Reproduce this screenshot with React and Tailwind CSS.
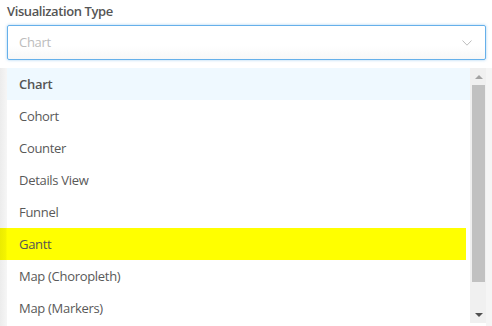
const OPTIONS = [
  'Chart',
  'Cohort',
  'Counter',
  'Details View',
  'Funnel',
  'Gantt',
  'Map (Choropleth)',
  'Map (Markers)',
];

function Chevron() {
  return (
    <svg width="10" height="6" viewBox="0 0 10 6" fill="none" className="text-[#bdbdbd]">
      <path d="M0.5 0.5 L5 5.2 L9.5 0.5" stroke="currentColor" strokeWidth="1" />
    </svg>
  );
}

function Option({ label }) {
  if (label === 'Chart') {
    return (
      <div className="flex h-[32px] items-center bg-[#eff9ff] pl-[12px] pt-[2px] font-semibold text-[#555]">
        {label}
      </div>
    );
  }
  if (label === 'Gantt') {
    return (
      <div className="-ml-[7px] mr-[4px] flex h-[32px] items-center bg-[linear-gradient(to_right,#ebeb00_0px,#f4f400_6px,#ffff00_7px)] pl-[19px] pt-[2px] text-[#555]">
        {label}
      </div>
    );
  }
  return <div className="flex h-[32px] items-center pl-[12px] pt-[2px] text-[#595959]">{label}</div>;
}

export default function App() {
  return (
    <div className="h-[326px] w-[492px] overflow-hidden bg-white text-[13px] tracking-[-0.3px]" style={{ fontFamily: '"Open Sans", "Noto Sans", sans-serif' }}>
      <div className="px-[7px] pt-[2px]">
        <div className="h-[23px] font-semibold leading-[18px] tracking-[-0.4px] text-[#555]">Visualization Type</div>
        <div className="flex h-[35px] w-[479px] items-center justify-between rounded-[2px] border border-[#66b0ea] bg-[linear-gradient(to_bottom,#ffffff_60%,#f7f7f7)] pl-[11px] pr-[13px] pt-[1px] shadow-[0_0_3px_rgba(102,175,233,0.6)]">
          <span className="text-[#bcbcbc]">Chart</span>
          <Chevron />
        </div>
      </div>

      <div className="mt-[8px] flex h-[258px]">
        <div className="w-[7px] bg-[linear-gradient(to_right,#ececec,#f6f6f6)]" />
        <div className="flex w-[463px] flex-col">
          {OPTIONS.map((o) => (
            <Option key={o} label={o} />
          ))}
        </div>
        <div className="flex h-[255px] w-[16px] flex-col items-center bg-[#f0f0f0] pl-[1px]">
          <div className="flex h-[17px] items-center">
            <div className="h-0 w-0 border-x-[4px] border-b-[4px] border-x-transparent border-b-[#a3a3a3]" />
          </div>
          <div className="h-[197px] w-[13px] bg-[#c1c1c1]" />
          <div className="flex-1" />
          <div className="flex h-[17px] items-center">
            <div className="h-0 w-0 border-x-[4px] border-t-[4px] border-x-transparent border-t-[#505050]" />
          </div>
        </div>
        <div className="w-[6px] bg-[#f5f5f5]" />
      </div>
    </div>
  );
}
